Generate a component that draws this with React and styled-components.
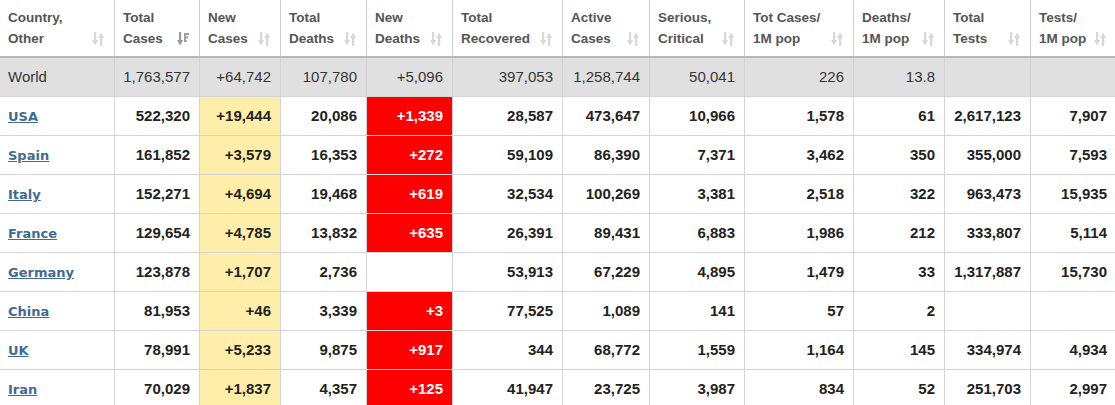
import styled, { createGlobalStyle } from "styled-components";

const GlobalStyle = createGlobalStyle`
  html, body {
    margin: 0;
    padding: 0;
    overflow: hidden;
    background: #ffffff;
  }
`;

const Table = styled.table`
  border-collapse: collapse;
  table-layout: fixed;
  width: 1117px;
  margin-left: -1px;
  font-family: "Liberation Sans", Arial, sans-serif;
`;

const Th = styled.th`
  height: 56px;
  padding: 0 8px 0 8px;
  border: 1px solid #cfcfcf;
  border-top: none;
  border-bottom: 2px solid #b8b8b8;
  vertical-align: middle;
  text-align: left;
  font-weight: bold;
  font-size: 13.5px;
  line-height: 21px;
  color: #555555;
`;

const HeadInner = styled.div`
  display: flex;
  justify-content: space-between;
  align-items: flex-end;
  padding-right: 2px;
`;

const IconBox = styled.span`
  display: flex;
  padding-bottom: 3px;
`;

const Tr = styled.tr`
  height: 39px;
  background: ${(p) => (p.$world ? "#e0e0e0" : "#ffffff")};
`;

const Td = styled.td`
  padding: 0 9px 0 8px;
  border: 1px solid #d4d4d4;
  text-align: ${(p) => (p.$left ? "left" : "right")};
  font-size: 15px;
  font-weight: ${(p) => (p.$world ? "normal" : "bold")};
  color: ${(p) => (p.$world ? "#363636" : "#222222")};
  white-space: nowrap;
  ${(p) => p.$tone === "yellow" && "background: #ffeeaa;"}
  ${(p) => p.$tone === "red" && "background: #ff0000; color: #ffffff;"}
`;

const CountryLink = styled.a`
  font-family: "DejaVu Sans", Verdana, sans-serif;
  font-size: 13px;
  font-weight: bold;
  color: #3f6b95;
  text-decoration: underline;
`;

const SortIcon = ({ active }) => (
  <svg width="12" height="14" viewBox="0 0 12 14">
    <g fill={active ? "#9c9c9c" : "#d8d8d8"}>
      <rect x="2" y="0" width="2.2" height="9" />
      <path d="M0 8 H6.2 L3.1 13.5 Z" />
      {active ? (
        <>
          <rect x="7" y="1" width="5" height="2" />
          <rect x="7" y="4.5" width="4" height="2" />
          <rect x="7" y="8" width="2.6" height="2" />
          <rect x="7" y="1" width="1.8" height="9" />
        </>
      ) : (
        <>
          <rect x="8" y="5" width="2.2" height="9" />
          <path d="M6 6 H12.2 L9.1 0.5 Z" />
        </>
      )}
    </g>
  </svg>
);

const columns = [
  { w: 115, label: ["Country,", "Other"] },
  { w: 85, label: ["Total", "Cases"], active: true },
  { w: 81, label: ["New", "Cases"] },
  { w: 86, label: ["Total", "Deaths"] },
  { w: 86, label: ["New", "Deaths"] },
  { w: 110, label: ["Total", "Recovered"] },
  { w: 87, label: ["Active", "Cases"] },
  { w: 95, label: ["Serious,", "Critical"] },
  { w: 109, label: ["Tot Cases/", "1M pop"] },
  { w: 91, label: ["Deaths/", "1M pop"] },
  { w: 86, label: ["Total", "Tests"] },
  { w: 86, label: ["Tests/", "1M pop"] },
];

const world = ["World", "1,763,577", "+64,742", "107,780", "+5,096", "397,053", "1,258,744", "50,041", "226", "13.8", "", ""];

const rows = [
  ["USA", "522,320", "+19,444", "20,086", "+1,339", "28,587", "473,647", "10,966", "1,578", "61", "2,617,123", "7,907"],
  ["Spain", "161,852", "+3,579", "16,353", "+272", "59,109", "86,390", "7,371", "3,462", "350", "355,000", "7,593"],
  ["Italy", "152,271", "+4,694", "19,468", "+619", "32,534", "100,269", "3,381", "2,518", "322", "963,473", "15,935"],
  ["France", "129,654", "+4,785", "13,832", "+635", "26,391", "89,431", "6,883", "1,986", "212", "333,807", "5,114"],
  ["Germany", "123,878", "+1,707", "2,736", "", "53,913", "67,229", "4,895", "1,479", "33", "1,317,887", "15,730"],
  ["China", "81,953", "+46", "3,339", "+3", "77,525", "1,089", "141", "57", "2", "", ""],
  ["UK", "78,991", "+5,233", "9,875", "+917", "344", "68,772", "1,559", "1,164", "145", "334,974", "4,934"],
  ["Iran", "70,029", "+1,837", "4,357", "+125", "41,947", "23,725", "3,987", "834", "52", "251,703", "2,997"],
];

const toneFor = (i, value) => {
  if (i === 2) return "yellow";
  if (i === 4 && value) return "red";
  return null;
};

export default function App() {
  return (
    <>
      <GlobalStyle />
      <Table>
        <colgroup>
          {columns.map((c, i) => (
            <col key={i} style={{ width: c.w }} />
          ))}
        </colgroup>
        <thead>
          <tr>
            {columns.map((c, i) => (
              <Th key={i}>
                <HeadInner>
                  <span>
                    {c.label[0]}
                    <br />
                    {c.label[1]}
                  </span>
                  <IconBox>
                    <SortIcon active={c.active} />
                  </IconBox>
                </HeadInner>
              </Th>
            ))}
          </tr>
        </thead>
        <tbody>
          <Tr $world>
            {world.map((v, i) => (
              <Td key={i} $world $left={i === 0}>
                {v}
              </Td>
            ))}
          </Tr>
          {rows.map((r) => (
            <Tr key={r[0]}>
              {r.map((v, i) =>
                i === 0 ? (
                  <Td key={i} $left>
                    <CountryLink href="#">{v}</CountryLink>
                  </Td>
                ) : (
                  <Td key={i} $tone={toneFor(i, v)}>
                    {v}
                  </Td>
                )
              )}
            </Tr>
          ))}
        </tbody>
      </Table>
    </>
  );
}
